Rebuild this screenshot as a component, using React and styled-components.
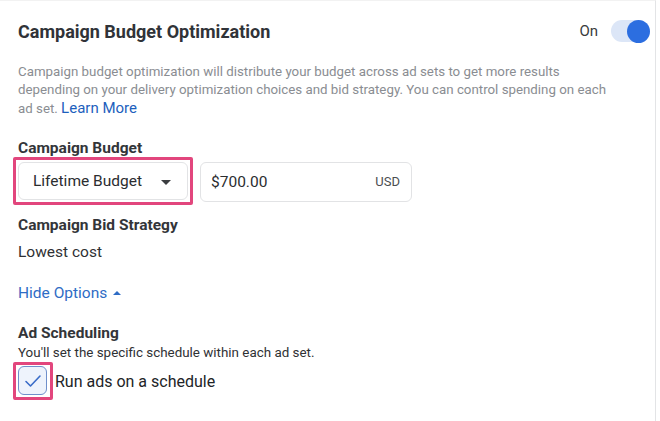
import React, { useState } from 'react';
import styled, { createGlobalStyle } from 'styled-components';

const GlobalStyle = createGlobalStyle`
  html, body { margin: 0; padding: 0; background: #fff; }
  body { font-family: Roboto, "Liberation Sans", Arial, sans-serif; color: #1c1e21; }
`;

const Panel = styled.div`
  width: 656px; height: 421px; box-sizing: border-box;
  border-right: 1px solid #e3e4e6; border-top: 1px solid #f2f2f2;
  padding: 13px 0 0 18px;
`;

const Header = styled.div`
  display: flex; align-items: center; justify-content: space-between;
  padding-right: 6px; height: 34px;
`;

const Title = styled.h2`
  margin: 0; font-size: 18px; font-weight: 700; color: #303338;
`;

const ToggleWrap = styled.div`
  display: flex; align-items: center; gap: 13px;
  font-size: 15px; color: #3a3b3d;
`;

const Track = styled.div`
  position: relative; width: 38px; height: 22px; border-radius: 11px; background: #dce6f7;
`;

const Knob = styled.div`
  position: absolute; top: 0; right: -1px; width: 23px; height: 23px; border-radius: 50%;
  background: #2c6ee0; margin-top: -0.5px;
`;

const Description = styled.p`
  margin: 15px 0 0; width: 620px; font-size: 13.3px; line-height: 18px; color: #8a8d92;
`;

const LearnMore = styled.a`
  color: #1d5fbd; font-size: 15px; text-decoration: none;
`;

const Label = styled.div`
  margin-top: ${p => p.$top}px; font-size: 15.5px; font-weight: 700; color: #333539; line-height: 18px;
`;

const Row = styled.div`
  display: flex; align-items: center; gap: 7px; margin: 0 0 0 -5px;
`;

const Highlight = styled.div`
  border: 3px solid #e2467d; padding: 2px; border-radius: 2px; display: inline-flex;
`;

const Select = styled.div`
  display: flex; align-items: center; justify-content: space-between; box-sizing: border-box;
  width: 170px; height: 38px; padding: 0 16px 0 14px;
  border: 1px solid #e2e3e5; border-radius: 6px; font-size: 15.5px; color: #2b2d30;
`;

const Caret = styled.span`
  width: 0; height: 0; border-left: 5px solid transparent; border-right: 5px solid transparent;
  border-top: 5px solid #3b3d40; margin-top: 2px;
`;

const Input = styled.div`
  display: flex; align-items: center; justify-content: space-between; box-sizing: border-box;
  width: 212px; height: 40px; padding: 0 11px 0 10px; margin-top: 1px;
  border: 1px solid #e2e3e5; border-radius: 6px; font-size: 15.5px; color: #2b2d30;
`;

const Currency = styled.span`
  font-size: 13px; color: #4b4d51;
`;

const Text = styled.div`
  margin-top: ${p => p.$top}px; font-size: ${p => p.$size || 15.5}px; color: #2f3134; line-height: 18px;
`;

const Toggler = styled.button`
  display: flex; align-items: center; gap: 6px; margin-top: 23px; padding: 0; border: 0;
  background: none; color: #2f6cc5; font: inherit; font-size: 15.5px; cursor: pointer;
`;

const UpCaret = styled.span`
  width: 0; height: 0; border-left: 4px solid transparent; border-right: 4px solid transparent;
  border-bottom: 4px solid #2f6cc5;
`;

const CheckRow = styled.label`
  display: flex; align-items: center; gap: 2px; margin: 0 0 0 -5px;
  font-size: 16px; color: #222427; cursor: pointer;
`;

const CheckHighlight = styled(Highlight)`
  padding: 1px 3px 2px 2px;
`;

const Box = styled.span`
  display: flex; align-items: center; justify-content: center;
  width: 29px; height: 29px; box-sizing: border-box; border-radius: 6px;
  border: 1.5px solid #6f8fcb; background: #eef3fc;
`;

export default function App() {
  const [checked, setChecked] = useState(true);
  return (
    <>
      <GlobalStyle />
      <Panel>
        <Header>
          <Title>Campaign Budget Optimization</Title>
          <ToggleWrap>
            On
            <Track><Knob /></Track>
          </ToggleWrap>
        </Header>
        <Description>
          Campaign budget optimization will distribute your budget across ad sets to get more results<br />
          depending on your delivery optimization choices and bid strategy. You can control spending on each<br />
          ad set. <LearnMore href="#">Learn More</LearnMore>
        </Description>

        <Label $top={21}>Campaign Budget</Label>
        <Row>
          <Highlight>
            <Select>Lifetime Budget <Caret /></Select>
          </Highlight>
          <Input>$700.00 <Currency>USD</Currency></Input>
        </Row>

        <Label $top={11}>Campaign Bid Strategy</Label>
        <Text $top={9}>Lowest cost</Text>

        <Toggler>Hide Options <UpCaret /></Toggler>

        <Label $top={22}>Ad Scheduling</Label>
        <Text $top={2} $size={13.4}>You'll set the specific schedule within each ad set.</Text>
        <CheckRow onClick={() => setChecked(!checked)}>
          <CheckHighlight>
            <Box>
              {checked && (
                <svg width="22" height="22" viewBox="0 0 22 22" fill="none">
                  <path d="M4 11.5l4.5 4.5 9.5-10" stroke="#3a6cc8" strokeWidth="1.6" strokeLinecap="round" strokeLinejoin="round" />
                </svg>
              )}
            </Box>
          </CheckHighlight>
          Run ads on a schedule
        </CheckRow>
      </Panel>
    </>
  );
}
